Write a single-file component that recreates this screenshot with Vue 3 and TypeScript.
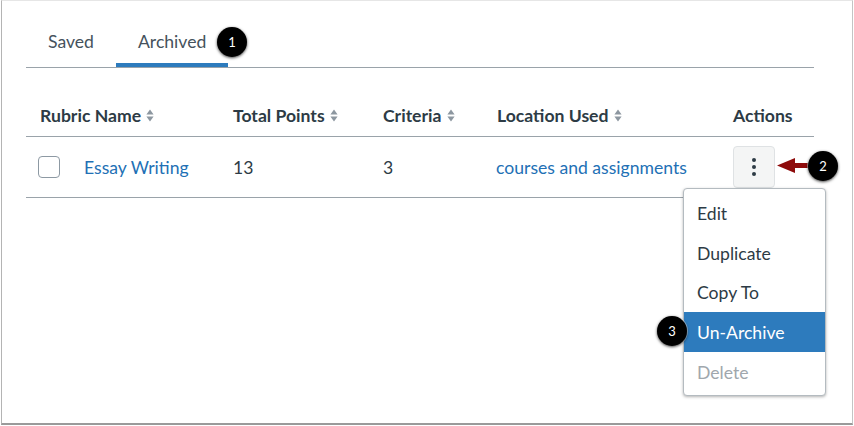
<template>
  <div class="frame">
    <!-- tabs -->
    <div class="tabs">
      <div v-for="tab in tabs" :key="tab.name" class="tab" :class="{ active: tab.active }">{{ tab.name }}</div>
    </div>

    <!-- table -->
    <div class="table">
      <div class="row head">
        <div v-for="col in columns" :key="col.name" class="cell">
          {{ col.name }}
          <svg v-if="col.sort" class="sort" width="8" height="13" viewBox="0 0 8 13">
            <path d="M4 0.5 L7.6 5.5 H0.4 Z M0.4 7.5 H7.6 L4 12.5 Z" fill="#8d97a0" />
          </svg>
        </div>
      </div>
      <div class="row body">
        <div class="cell first">
          <span class="check"></span>
          <a class="link">Essay Writing</a>
        </div>
        <div class="cell">13</div>
        <div class="cell">3</div>
        <div class="cell loc"><a class="link">courses and assignments</a></div>
        <div class="cell">
          <button class="kebab">
            <svg width="4" height="20" viewBox="0 0 4 20">
              <circle cx="2" cy="3" r="2" fill="#2d3b45" />
              <circle cx="2" cy="10" r="2" fill="#2d3b45" />
              <circle cx="2" cy="17" r="2" fill="#2d3b45" />
            </svg>
          </button>
        </div>
      </div>
    </div>

    <!-- dropdown -->
    <ul class="menu">
      <li v-for="item in menu" :key="item.label" :class="item.state">{{ item.label }}</li>
    </ul>

    <!-- red arrow -->
    <svg class="arrow" width="31" height="15" viewBox="0 0 31 15">
      <path d="M0 7.5 L18 0 V5 H31 V10 H18 V15 Z" fill="#8e0b0b" />
    </svg>

    <!-- callouts -->
    <div v-for="c in callouts" :key="c.n" class="callout" :class="'c' + c.n">{{ c.n }}</div>
  </div>
</template>

<script setup lang="ts">
const tabs = [
  { name: 'Saved', active: false },
  { name: 'Archived', active: true },
]

const columns = [
  { name: 'Rubric Name', sort: true },
  { name: 'Total Points', sort: true },
  { name: 'Criteria', sort: true },
  { name: 'Location Used', sort: true },
  { name: 'Actions', sort: false },
]

const menu = [
  { label: 'Edit', state: '' },
  { label: 'Duplicate', state: '' },
  { label: 'Copy To', state: '' },
  { label: 'Un-Archive', state: 'hover' },
  { label: 'Delete', state: 'disabled' },
]

const callouts = [{ n: 1 }, { n: 2 }, { n: 3 }]
</script>

<style>
html,
body {
  margin: 0;
  background: #fff;
}
</style>

<style scoped>
.frame {
  position: relative;
  box-sizing: border-box;
  width: 852px;
  height: 425px;
  margin-left: 1px;
  padding: 18px 38px 0 24px;
  background: #fff;
  border-left: 1px solid #b4b4b4;
  border-right: 1px solid #c4c4c4;
  border-top: 1px solid #e6e6e6;
  border-bottom: 2px solid #9a9a9a;
  font-family: Lato, "Liberation Sans", sans-serif;
  font-size: 17.6px;
  color: #2d3b45;
}

.tabs {
  display: flex;
  height: 48px;
  border-bottom: 1px solid #9aa3aa;
}

.tab {
  box-sizing: border-box;
  height: 48px;
  padding: 13px 22px 0;
  color: #45525c;
  line-height: 20px;
}

.tab.active {
  border-bottom: 4px solid #2d7bbd;
}

.table {
  margin-top: 33px;
}

.row {
  display: grid;
  grid-template-columns: 193px 150px 114px 236px 1fr;
  padding-left: 14px;
  border-bottom: 1px solid #9aa3aa;
}

.row.head {
  height: 35px;
  font-weight: 700;
  line-height: 30px;
}

.row.body {
  height: 60px;
  align-items: center;
}

.cell {
  white-space: nowrap;
}

.sort {
  margin-left: 1px;
  vertical-align: 0;
}

.first {
  display: flex;
  align-items: center;
  gap: 24px;
  margin-left: -2px;
}

.check {
  box-sizing: border-box;
  width: 22px;
  height: 22px;
  background: #fff;
  border: 1px solid #8d99a3;
  border-radius: 4px;
}

.loc {
  margin-left: -1px;
}

.link {
  color: #2270b5;
}

.kebab {
  display: flex;
  align-items: center;
  justify-content: center;
  box-sizing: border-box;
  width: 42px;
  height: 42px;
  padding: 0;
  background: #f4f5f5;
  border: 1px solid #dfe2e4;
  border-radius: 4px;
}

.menu {
  position: absolute;
  left: 681px;
  top: 187px;
  box-sizing: border-box;
  width: 143px;
  margin: 0;
  padding: 4px 0;
  list-style: none;
  background: #fff;
  border: 1px solid #b4bbc0;
  border-radius: 4px;
  box-shadow: 0 1px 3px rgba(0, 0, 0, 0.3);
}

.menu li {
  height: 39.7px;
  padding-left: 13px;
  line-height: 41px;
  color: #2d3b45;
}

.menu li.hover {
  background: #2d7bbd;
  color: #fff;
}

.menu li.disabled {
  color: #a0a7ad;
}

.arrow {
  position: absolute;
  left: 775px;
  top: 157px;
}

.callout {
  position: absolute;
  width: 30px;
  height: 30px;
  border-radius: 50%;
  background: #000;
  color: #fff;
  font-size: 13px;
  line-height: 30px;
  text-align: center;
  box-shadow: 0 1px 3px rgba(0, 0, 0, 0.75), 0 0 0 1px rgba(255, 255, 255, 0.5);
}

.c1 {
  left: 215px;
  top: 26px;
}

.c2 {
  left: 806px;
  top: 150px;
}

.c3 {
  left: 655px;
  top: 315px;
}
</style>
